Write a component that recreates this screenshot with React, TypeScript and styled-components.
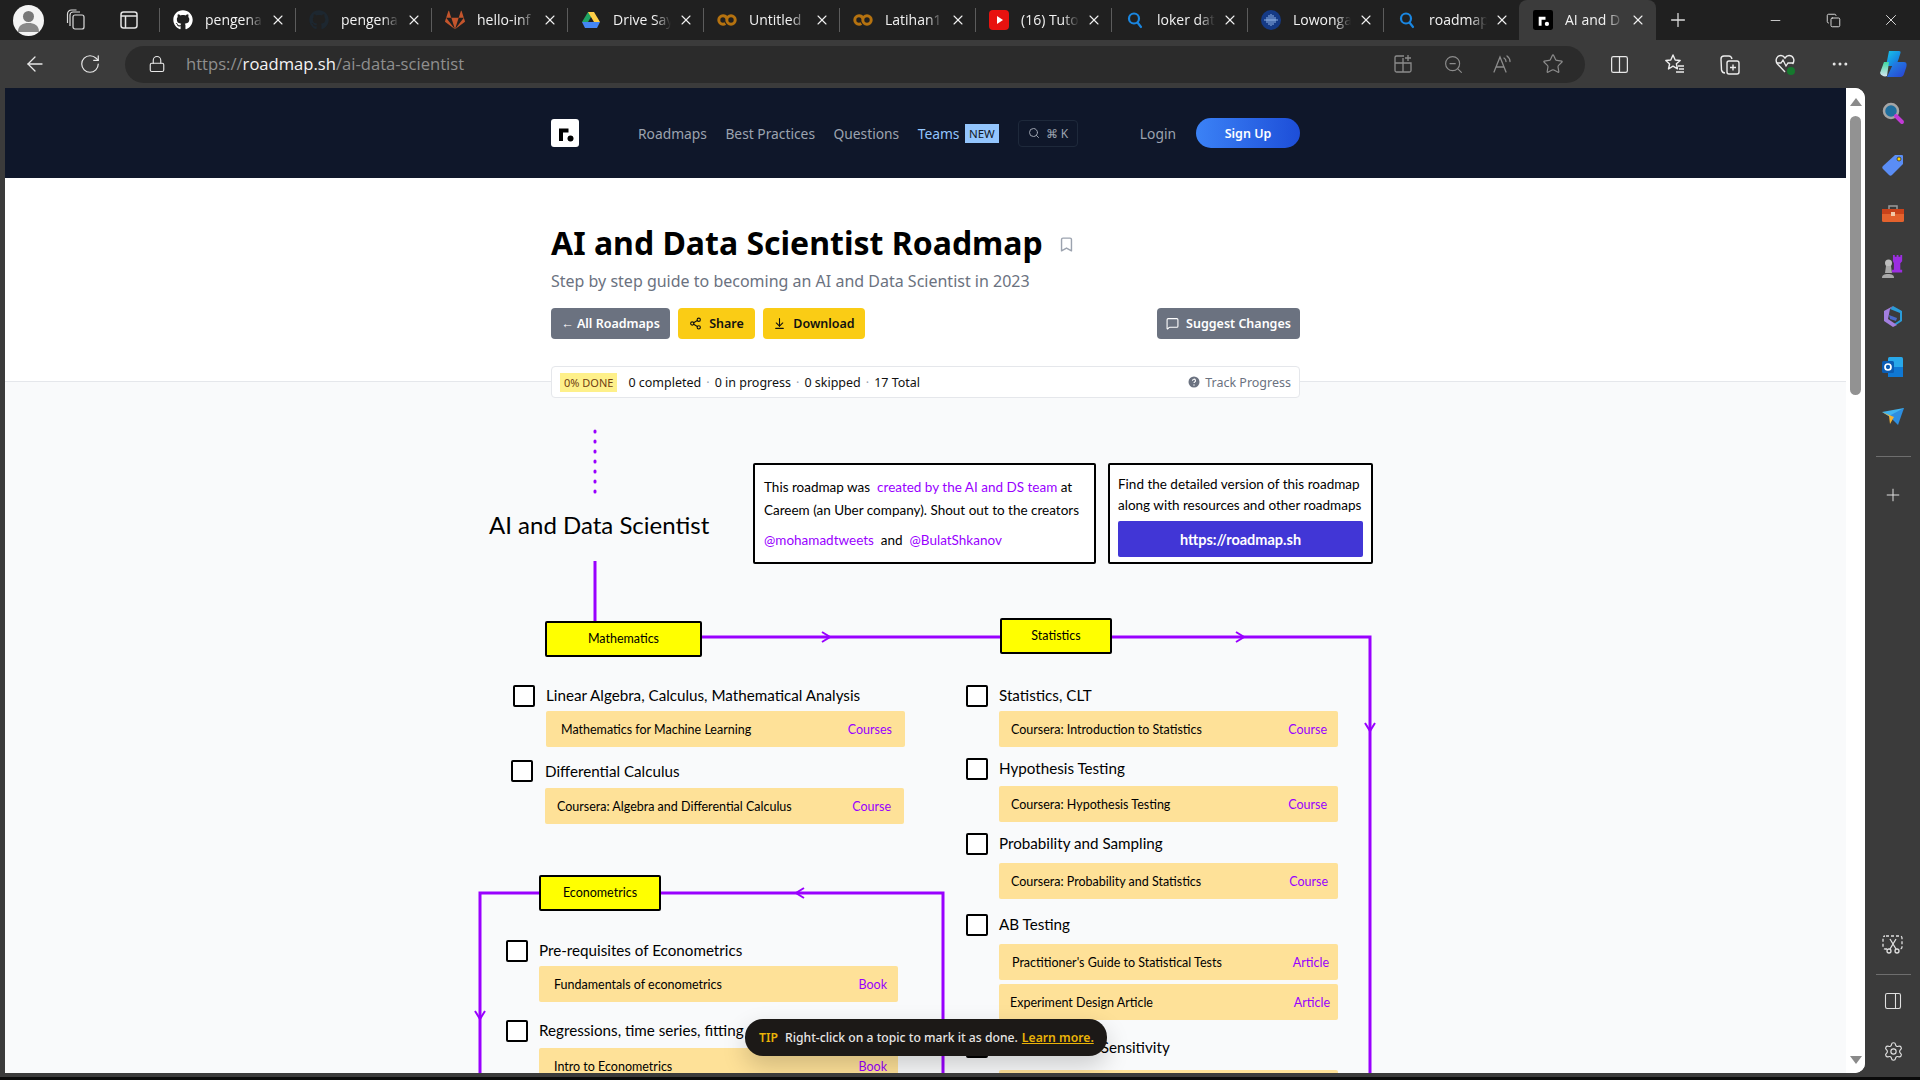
import React from "react";
import styled, { createGlobalStyle } from "styled-components";
import { ArrowLeft, RotateCw, Lock, ZoomOut, Star, Columns2, Ellipsis, Plus, Minus, X, Copy, Search, Share2, ArrowDownToLine, MessageSquare, Bookmark, PanelRight, Settings } from "lucide-react";
import { FaGithub, FaGitlab } from "react-icons/fa";

const Global = createGlobalStyle`
  html, body { margin: 0; padding: 0; height: 1080px; overflow: hidden; background: #0a0a0a; }
  * { box-sizing: border-box; }
`;

const Window = styled.div`
  width: 1920px; height: 1080px; display: flex; flex-direction: column;
  background: #3b3b3b; font-family: "Open Sans", "Noto Sans", sans-serif; color: #fff;
`;
const TabStrip = styled.div`
  height: 40px; background: #202020; display: flex; align-items: center; flex-shrink: 0; position: relative;
`;
const Avatar = styled.div`
  width: 31px; height: 31px; border-radius: 50%; background: #f4f4f4; margin-left: 13px; display: flex; align-items: center; justify-content: center;
  overflow: hidden; flex-shrink: 0;
`;
const StripIcon = styled.div`
  width: ${p => p.$w}px; display: flex; justify-content: center; color: #dcdcdc; flex-shrink: 0;
`;
const StripGap = styled.div`
  width: 9px; flex-shrink: 0;
`;
const Tab = styled.div`
  width: ${p => p.$active ? 137 : 136}px; height: 40px; display: flex; align-items: center; flex-shrink: 0; position: relative; padding-left: 14px;
  background: ${p => p.$active ? "#3b3b3b" : "transparent"};
  border-radius: ${p => p.$active ? "8px 8px 0 0" : "0"};
  &::before {
    content: ''; position: absolute; left: 0; top: 8px; height: 24px; width: 1px;
    background: ${p => p.$active || p.$bare ? "transparent" : "#5c5c5c"};
  }
`;
const TabFav = styled.div`
  width: 20px; height: 20px; display: flex; align-items: center; justify-content: center; flex-shrink: 0; margin-right: 12px;
`;
const TabTitle = styled.div`
  width: 58px; font-size: 14px; line-height: 18px; margin-top: -1px; color: #f2f2f2; white-space: nowrap; overflow: hidden; flex-shrink: 0;
  -webkit-mask-image: linear-gradient(to right, #000 72%, transparent 100%);
  mask-image: linear-gradient(to right, #000 72%, transparent 100%);
`;
const TabClose = styled.div`
  display: flex; margin-left: 7px; color: #f2f2f2;
`;
const WinControls = styled.div`
  margin-left: auto; display: flex; align-items: center; color: #ececec;
`;
const WinBtn = styled.div`
  width: 58px; display: flex; justify-content: center;
`;
const Toolbar = styled.div`
  height: 48px; background: #3b3b3b; display: flex; align-items: center; flex-shrink: 0; color: #e8e8e8;
`;
const ToolBtn = styled.div`
  width: ${p => p.$w || 55}px; display: flex; justify-content: center; align-items: center; flex-shrink: 0;
`;
const Address = styled.div`
  width: 1460px; height: 37px; border-radius: 19px; background: #2b2b2b; display: flex; align-items: center; margin-left: 15px; margin-right: 7px;
  padding-left: 23px; flex-shrink: 0;
`;
const UrlText = styled.div`
  margin-left: 20px; font-size: 16.6px; line-height: 22px; margin-top: -1px; color: #8f8f8f;
  b { color: #f4f4f4; font-weight: 400; }
`;
const AddressTools = styled.div`
  margin-left: auto; display: flex; align-items: center; color: #8c8c8c; padding-right: 7px;
`;
const AddrBtn = styled.div`
  width: 50px; display: flex; justify-content: center;
`;
const Body = styled.div`
  flex: 1; display: flex; padding-left: 5px; min-height: 0; background: #3b3b3b;
`;
const Viewport = styled.div`
  width: 1860px; height: 985px; display: flex; background: #fff; border-radius: 0 10px 10px 0; overflow: hidden; position: relative;
`;
const Page = styled.div`
  width: 1841px; display: flex; flex-direction: column; background: #fff; font-family: "Noto Sans", "Open Sans", sans-serif;
`;
const Nav = styled.div`
  height: 90px; background: #0f172a; display: flex; padding-left: 546px; flex-shrink: 0;
`;
const NavInner = styled.div`
  width: 749px; height: 90px; display: flex; align-items: center; font-size: 13.8px; color: #9ca3af;
`;
const LogoBox = styled.div`
  width: 28px; height: 28px; margin-right: 59px; display: flex;
`;
const NavLink = styled.span`
  margin-right: 18.5px; color: ${p => p.$c || "#9ca3af"}; white-space: nowrap;
`;
const NewBadge = styled.span`
  background: #93c5fd; color: #111827; font-size: 11.5px; padding: 0 4px; height: 19px; line-height: 19px; margin-left: -13px; margin-top: 1px;
`;
const SearchBtn = styled.div`
  margin-left: 19px; width: 60px; height: 27px; border: 1px solid #1e293b; border-radius: 4px; display: flex; align-items: center; justify-content: center; gap: 6px; font-size: 12px; color: #9ca3af;
`;
const Login = styled.span`
  margin-left: auto; margin-right: 20px;
`;
const SignUp = styled.div`
  width: 104px; height: 30px; border-radius: 15px; background: linear-gradient(to right, #3b82f6, #1d4ed8); color: #fff; font-weight: 600; font-size: 12.5px;
  display: flex; align-items: center; justify-content: center;
`;
const Header = styled.div`
  width: 749px; margin: 0 0 0 546px; position: relative; z-index: 2; flex-shrink: 0;
`;
const TitleRow = styled.div`
  display: flex; align-items: center; margin-top: 42px; height: 46px;
`;
const Title = styled.h1`
  margin: 0; font-size: 32px; font-weight: 700; color: #000; line-height: 46px; white-space: nowrap;
`;
const BookmarkWrap = styled.div`
  margin-left: 15px; color: #9ca3af; display: flex; margin-top: 2px;
`;
const Sub = styled.p`
  margin: 3px 0 0; font-size: 16px; color: #6b7280; line-height: 24px; white-space: nowrap;
`;
const Actions = styled.div`
  display: flex; gap: 8px; margin-top: 15px;
`;
const Btn = styled.div`
  height: 31px; width: ${p => p.$w}px; border-radius: 4px; font-size: 12.5px; font-weight: 600; display: flex; align-items: center; justify-content: center; gap: 7px;
  background: ${p => p.$gray ? "#6b7280" : "#facc15"}; color: ${p => p.$gray ? "#fff" : "#111"}; white-space: nowrap;
  ${p => p.$push ? "margin-left: auto;" : ""}
`;
const Progress = styled.div`
  height: 32px; margin-top: 27px; margin-bottom: -16px; background: #fff; border: 1px solid #e5e7eb; border-radius: 4px; display: flex; align-items: center; padding: 0 8px; font-size: 12.5px; color: #111; white-space: nowrap;
`;
const DoneBadge = styled.span`
  background: #fef08a; color: #713f12; height: 19px; line-height: 19px; padding: 0 4px; font-size: 11px; margin-right: 11px; 
`;
const Dot = styled.span`
  color: #9ca3af; margin: 0 5px;
`;
const Track = styled.span`
  margin-left: auto; color: #6b7280; display: flex; align-items: center; gap: 5px;
`;
const Canvas = styled.div`
  flex: 1; background: #f9fafb; border-top: 1px solid #e5e7eb; position: relative; overflow: hidden; margin-top: -1px;
  font-family: Lato, "Open Sans", sans-serif; color: #000;
`;
const Wires = styled.svg`
  position: absolute; left: 0; top: 0;
`;
const Big = styled.div`
  position: absolute; left: ${p => p.$x - 5}px; top: ${p => p.$y - 382}px; font-size: 24px; white-space: nowrap; line-height: 30px;
`;
const Note = styled.div`
  position: absolute; left: ${p => p.$x - 5}px; top: ${p => p.$y - 382}px; width: ${p => p.$w}px; height: 101px; background: #fff; border: 2.5px solid #000; border-radius: 2px; font-size: 13.5px; padding: ${p => p.$pad};
`;
const NoteLine = styled.div`
  line-height: ${p => p.$h}px; white-space: nowrap;
  a { color: #9900ff; }
`;
const RoadBtn = styled.div`
  height: 36px; margin-top: 5px; background: #4136d6; color: #fff; border-radius: 2px; font-size: 14.5px; font-weight: 700; display: flex; align-items: center; justify-content: center;
`;
const Topic = styled.div`
  position: absolute; left: ${p => p.$x - 5}px; top: ${p => p.$y - 382}px; width: ${p => p.$w}px; height: ${p => p.$h}px; background: #ffff00; border: 2.5px solid #000; border-radius: 2px; font-size: 12.5px; display: flex; align-items: center; justify-content: center; padding-bottom: 1px;
`;
const Check = styled.div`
  position: absolute; left: ${p => p.$x - 5}px; top: ${p => p.$y - 382}px; width: 22px; height: 22px; border: 2.5px solid #000; border-radius: 2px; background: #fff;
`;
const Label = styled.div`
  position: absolute; left: ${p => p.$x - 5}px; top: ${p => p.$y - 382 - 12}px; font-size: 15.2px; line-height: 22px; white-space: nowrap;
`;
const Res = styled.div`
  position: absolute; left: ${p => p.$x - 5}px; top: ${p => p.$y - 382}px; width: ${p => p.$w}px; height: 36px; background: #fee198; border-radius: 2px; display: flex; align-items: center; justify-content: space-between;
  padding: 0 ${p => p.$end}px 0 ${p => p.$pad}px; font-size: 12.5px; white-space: nowrap;
  span { color: #9900ff; }
`;
const TipBar = styled.div`
  position: absolute; left: 740px; top: 931px; width: 362px; height: 37px; border-radius: 18px; background: #1c1917; color: #e7e5e4; display: flex; align-items: center; padding-left: 14px; font-size: 12.2px; white-space: nowrap;
  box-shadow: 0 10px 25px rgba(0,0,0,0.18); font-family: "Noto Sans", sans-serif; z-index: 5; font-weight: 500;
  b { color: #eab308; font-weight: 600; margin-right: 7px; }
  u { color: #eab308; margin-left: 4px; font-weight: 600; }
`;
const Scrollbar = styled.div`
  width: 19px; background: #fff; display: flex; flex-direction: column; align-items: center; padding-top: 10px;
`;
const ArrowUp = styled.div`
  width: 0; height: 0; border-left: 6px solid transparent; border-right: 6px solid transparent; border-bottom: 8px solid #8a8a8a;
`;
const ArrowDown = styled.div`
  width: 0; height: 0; border-left: 6px solid transparent; border-right: 6px solid transparent; border-top: 8px solid #8a8a8a; margin-top: auto; margin-bottom: 9px;
`;
const Thumb = styled.div`
  width: 11px; height: 279px; border-radius: 6px; background: #929292; margin-top: 10px;
`;
const Side = styled.div`
  width: 55px; display: flex; flex-direction: column; align-items: center; color: #e0e0e0; height: 989px; padding: 1px 0 0 1px;
`;
const SideIcon = styled.div`
  height: 50.5px; width: 100%; display: flex; align-items: center; justify-content: center; flex-shrink: 0;
`;
const SideRule = styled.div`
  width: 35px; height: 1px; background: #6e6e6e; flex-shrink: 0; margin: ${p => p.$m};
`;
const SideSpring = styled.div`
  flex: 1;
`;
const BottomStrip = styled.div`
  height: 3px; background: #0b0b0b; flex-shrink: 0;
`;

const Colab = () => <svg width="20" height="14" viewBox="0 0 20 14" fill="none" stroke="#b5720f" strokeWidth="3"><circle cx="6" cy="7" r="4.2" strokeDasharray="20 7" strokeDashoffset="-4"/><circle cx="14" cy="7" r="4.2"/></svg>;
const Mag = () => <svg width="18" height="18" viewBox="0 0 18 18" fill="none" stroke="#1a86e0" strokeWidth="2.2"><circle cx="8" cy="7.5" r="5"/><path d="M11.5 11.5 15 16" strokeLinecap="round"/></svg>;
const Drive = () => <svg width="20" height="18" viewBox="0 0 20 18"><path d="M7 1h6L7 11H1z" fill="#1fa463"/><path d="M13 1l6 10h-6L7 1z" fill="#ffcf47"/><path d="M1 11h18l-3 6H4z" fill="#4486f4"/></svg>;
const YT = () => <svg width="20" height="20" viewBox="0 0 20 20"><rect width="20" height="20" rx="4" fill="#e8120f"/><path d="M8 6l6 4-6 4z" fill="#fff"/></svg>;
const Low = () => <svg width="20" height="20" viewBox="0 0 20 20"><circle cx="10" cy="10" r="10" fill="#153a85"/><path d="M3 10h14M10 4v12M6 7v6M14 7v6M8 5v10M12 5v10" stroke="#8fb2e6" strokeWidth="1"/></svg>;
const RLogo = ({ s = 20, bg = "#000", fg = "#fff" }: any) => <svg width={s} height={s} viewBox="0 0 28 28"><rect width="28" height="28" rx="3" fill={bg}/><path d="M8 22V9.5h9.5v4H12V22z" fill={fg}/><circle cx="19.5" cy="19.5" r="3" fill={fg}/></svg>;

const AvatarImg = () => <svg width="31" height="31" viewBox="0 0 31 31"><circle cx="15.5" cy="11.5" r="5.5" fill="#777"/><path d="M5 27c0-7 5-9 10.5-9S26 20 26 27z" fill="#888"/></svg>;
const Workspaces = () => <svg width="22" height="22" viewBox="0 0 22 22" fill="none" stroke="#dcdcdc" strokeWidth="1.2"><rect x="8" y="6" width="11" height="14" rx="2"/><path d="M5 17V6a3 3 0 0 1 3-3h7"/><path d="M2.5 14V5a4 4 0 0 1 4-4h5"/></svg>;
const TabsIcon = () => <svg width="20" height="20" viewBox="0 0 20 20" fill="none" stroke="#e2e2e2" strokeWidth="1.5"><rect x="2" y="2" width="16" height="16" rx="2.5"/><path d="M2 6h16M6.5 6v12"/></svg>;

const GridAdd = () => <svg width="20" height="20" viewBox="0 0 20 20" fill="none" stroke="#8c8c8c" strokeWidth="1.3"><path d="M11 2H3.5A1.5 1.5 0 0 0 2 3.5v13A1.5 1.5 0 0 0 3.5 18h13a1.5 1.5 0 0 0 1.500-1.500V9H2M10 4v14M15 1v6M12 4h6"/></svg>;
const ReadAloud = () => <svg width="24" height="22" viewBox="0 0 24 22" fill="none" stroke="#8c8c8c" strokeWidth="1.3" strokeLinecap="round"><path d="M3 19 9 4l6 15M5 14h8"/><path d="M13 5c1.500 1 2 2 2 3.500M16 3c2 1.500 3 3 3 5.500"/></svg>;
const FavList = () => <svg width="22" height="22" viewBox="0 0 22 22" fill="none" stroke="#ececec" strokeWidth="1.4" strokeLinejoin="round"><path d="M9 2l2.200 5 5 .5-3.800 3.300 1.100 5L9 13.200 4.500 16l1.100-5L1.800 7.500l5-.5z"/><path d="M14 13h6M15 16h5M12 19h8"/></svg>;
const Collections = () => <svg width="22" height="22" viewBox="0 0 22 22" fill="none" stroke="#ececec" strokeWidth="1.4"><path d="M6 20c-2 0-3-1-3.500-3L2 6c0-2 1-3 3-3h5c2 0 2.500 1 3 3"/><rect x="8" y="8" width="12" height="13" rx="2"/><path d="M14 11.500v6M11 14.500h6"/></svg>;
const Health = () => <svg width="22" height="22" viewBox="0 0 22 22"><path d="M11 19 3.500 11C.5 7 3 2.500 7 2.500c2 0 3 1 4 2.500 1-1.500 2-2.500 4-2.500 4 0 6.500 4.500 3.500 8.500" fill="none" stroke="#ececec" strokeWidth="1.400"/><path d="M3 10h4l2-3 3 6 2-3h5" fill="none" stroke="#ececec" strokeWidth="1.300"/><circle cx="17" cy="18" r="4" fill="#16792e"/></svg>;
const Copilot = () => <svg width="30" height="30" viewBox="0 0 30 30"><defs><linearGradient id="cpA" x1="0" y1="0" x2="1" y2="1"><stop offset="0" stopColor="#19c7e8"/><stop offset="1" stopColor="#1466e0"/></linearGradient><linearGradient id="cpB" x1="0" y1="0" x2="1" y2="1"><stop offset="0" stopColor="#1f8fe8"/><stop offset="1" stopColor="#2a3fd0"/></linearGradient><linearGradient id="cpC" x1="0" y1="0" x2="0" y2="1"><stop offset="0" stopColor="#3fd7a0"/><stop offset="1" stopColor="#d6e6f0"/></linearGradient></defs><path d="M11 2h10c3 0 1 3 0 7l-3 8H8z" fill="url(#cpA)"/><path d="M6 13h5l-2 14c-2 1-6 0-7-3z" fill="url(#cpC)"/><path d="M16 13h10c3 0 3 3 2 6l-2 6c-1 3-3 3-5 3H9z" fill="url(#cpB)"/></svg>;

const S1 = () => <svg width="24" height="24" viewBox="0 0 24 24"><circle cx="10" cy="9" r="7" fill="#1f6f9f" stroke="#a5a5a5" strokeWidth="2.500"/><path d="M15 14l6 6" stroke="#c23ad6" strokeWidth="4" strokeLinecap="round"/></svg>;
const S2 = () => <svg width="24" height="24" viewBox="0 0 24 24"><path d="M14 2h7c1 0 1 1 1 1v8L11 22c-1 1-2 1-3 0l-6-6c-1-1-1-2 0-3z" fill="#5a8df5"/><circle cx="18" cy="6" r="2" fill="#ffd400" stroke="#333" strokeWidth=".8"/></svg>;
const S3 = () => <svg width="24" height="24" viewBox="0 0 24 24"><path d="M8 6V3h8v3" fill="none" stroke="#9a9a9a" strokeWidth="1.500"/><rect x="1" y="6" width="22" height="13" rx="1.500" fill="#e4622d"/><rect x="1" y="6" width="22" height="5" fill="#c9421a"/><rect x="10" y="9" width="4" height="4" fill="#f2c9a8"/></svg>;
const S4 = () => <svg width="24" height="24" viewBox="0 0 24 24"><path d="M13 1h2v2h2V1h2v2h2V1h2v7l-2 2v7h2v3H12v-3h2v-7l-1-2z" fill="#9b2ee0" transform="scale(.92)"/><circle cx="7.500" cy="9" r="3.500" fill="#bdbdbd"/><path d="M5 12h5l1 7H4zM1 24c0-3 2-4 6-4s6 1 6 4z" fill="#a8a8a8"/></svg>;
const S5 = () => <svg width="24" height="24" viewBox="0 0 24 24"><path d="M12 2 21 7v10l-6 4-2-1 6-4V9L9 5z" fill="#2a9bd8"/><path d="M3 7 12 2 9 5 7 15l6 4 3 2-4 2-9-6z" fill="#a37fe0"/><path d="M8 11l8 3-1 3-6-2z" fill="#4a69c9"/></svg>;
const S6 = () => <svg width="24" height="24" viewBox="0 0 24 24"><rect x="7" y="2" width="15" height="20" rx="1.500" fill="#28a8ea"/><path d="M7 12l15 0v10H7z" fill="#0f78d4"/><rect x="1" y="6" width="12" height="12" rx="1.500" fill="#0b5cb3"/><circle cx="7" cy="12" r="3" fill="none" stroke="#fff" strokeWidth="1.700"/></svg>;
const S7 = () => <svg width="24" height="24" viewBox="0 0 24 24"><path d="M1 7l22-4-9 12z" fill="#40b4f0"/><path d="M8 11 23 3 17 20z" fill="#2d8ee0"/><path d="M1 7l7 4 1 8 4-7z" fill="#f2b233"/></svg>;
const ScreenCut = () => <svg width="22" height="22" viewBox="0 0 22 22" fill="none" stroke="#e0e0e0" strokeWidth="1.300"><path d="M4 3h14a2 2 0 0 1 2 2v9a2 2 0 0 1-2 2h-1M5 16H3a2 2 0 0 1-2-2V5a2 2 0 0 1 2-2" strokeDasharray="3 2"/><circle cx="7" cy="18" r="2"/><circle cx="15" cy="18" r="2"/><path d="M8 16 14 6M14 16 8 6"/></svg>;

const tabs: [React.ReactNode, string, boolean?][] = [
  [<FaGithub size={20} color="#fff" />, "pengena"],
  [<FaGithub size={20} color="#1d2730" />, "pengena"],
  [<FaGitlab size={20} color="#c4552c" />, "hello-inf"],
  [<Drive />, "Drive Say"],
  [<Colab />, "Untitled"],
  [<Colab />, "Latihan1"],
  [<YT />, "(16) Tuto"],
  [<Mag />, "loker dat"],
  [<Low />, "Lowonga"],
  [<Mag />, "roadmap"],
  [<RLogo />, "AI and D", true],
];

const checks: [number, number][] = [[513,685],[511,760],[966,685],[966,758],[966,833],[966,914],[966,1036],[506,940],[506,1020]];
const labels: [number, number, string][] = [
  [546,696,"Linear Algebra, Calculus, Mathematical Analysis"],[545,772,"Differential Calculus"],[999,696,"Statistics, CLT"],[999,769,"Hypothesis Testing"],[999,844,"Probability and Sampling"],[999,925,"AB Testing"],[999,1048,"Increasing Test Sensitivity"],[539,951,"Pre-requisites of Econometrics"],[539,1031,"Regressions, time series, fitting distributions"],
];
const resources: [number, number, number, number, number, string, string][] = [
  [546,711,359,15,13,"Mathematics for Machine Learning","Courses"],
  [545,788,359,12,13,"Coursera: Algebra and Differential Calculus","Course"],
  [999,711,339,12,11,"Coursera: Introduction to Statistics","Course"],
  [999,786,339,12,11,"Coursera: Hypothesis Testing","Course"],
  [999,863,339,12,10,"Coursera: Probability and Statistics","Course"],
  [999,944,339,13,9,"Practitioner's Guide to Statistical Tests","Article"],
  [999,984,339,11,8,"Experiment Design Article","Article"],
  [999,1070,339,12,9,"Test Sensitivity","Article"],
  [539,966,359,15,11,"Fundamentals of econometrics","Book"],
  [539,1048,359,15,11,"Intro to Econometrics","Book"],
];

export default function App() {
  return (
    <Window>
      <Global />
      <TabStrip>
        <Avatar><AvatarImg /></Avatar>
        <StripIcon $w={64}><Workspaces /></StripIcon>
        <StripIcon $w={42}><TabsIcon /></StripIcon>
        <StripGap />
        {tabs.map(([ic, t, act], i) => (
          <Tab key={i} $active={act} $bare={i === 10}>
            <TabFav>{ic}</TabFav>
            <TabTitle>{t}</TabTitle>
            <TabClose><X size={16} strokeWidth={1.6} /></TabClose>
          </Tab>
        ))}
        <StripIcon $w={44}><Plus size={22} strokeWidth={1.4} /></StripIcon>
        <WinControls>
          <WinBtn><Minus size={15} strokeWidth={1.3} /></WinBtn>
          <WinBtn><Copy size={15} strokeWidth={1.4} /></WinBtn>
          <WinBtn><X size={18} strokeWidth={1.2} /></WinBtn>
        </WinControls>
      </TabStrip>
      <Toolbar>
        <ToolBtn $w={69}><ArrowLeft size={24} strokeWidth={1.3} /></ToolBtn>
        <ToolBtn $w={41}><RotateCw size={22} strokeWidth={1.3} /></ToolBtn>
        <Address>
          <Lock size={18} strokeWidth={1.5} color="#e8e8e8" />
          <UrlText>https://<b>roadmap.sh</b>/ai-data-scientist</UrlText>
          <AddressTools>
            <AddrBtn><GridAdd /></AddrBtn>
            <AddrBtn><ZoomOut size={21} strokeWidth={1.3} /></AddrBtn>
            <AddrBtn><ReadAloud /></AddrBtn>
            <AddrBtn><Star size={22} strokeWidth={1.3} /></AddrBtn>
          </AddressTools>
        </Address>
        <ToolBtn><Columns2 size={21} strokeWidth={1.4} /></ToolBtn>
        <ToolBtn><FavList /></ToolBtn>
        <ToolBtn><Collections /></ToolBtn>
        <ToolBtn><Health /></ToolBtn>
        <ToolBtn><Ellipsis size={20} strokeWidth={1.6} /></ToolBtn>
        <ToolBtn $w={52}><Copilot /></ToolBtn>
      </Toolbar>
      <Body>
        <Viewport>
          <Page>
            <Nav>
              <NavInner>
                <LogoBox><RLogo s={28} bg="#fff" fg="#000" /></LogoBox>
                <NavLink>Roadmaps</NavLink>
                <NavLink>Best Practices</NavLink>
                <NavLink>Questions</NavLink>
                <NavLink $c="#93c5fd">Teams</NavLink>
                <NewBadge>NEW</NewBadge>
                <SearchBtn><Search size={12} /><span>⌘ K</span></SearchBtn>
                <Login>Login</Login>
                <SignUp>Sign Up</SignUp>
              </NavInner>
            </Nav>
            <Header>
              <TitleRow>
                <Title>AI and Data Scientist Roadmap</Title>
                <BookmarkWrap><Bookmark size={17} strokeWidth={2} /></BookmarkWrap>
              </TitleRow>
              <Sub>Step by step guide to becoming an AI and Data Scientist in 2023</Sub>
              <Actions>
                <Btn $gray $w={119}>← All Roadmaps</Btn>
                <Btn $w={77}><Share2 size={13} />Share</Btn>
                <Btn $w={102}><ArrowDownToLine size={13} />Download</Btn>
                <Btn $gray $push $w={143}><MessageSquare size={13} />Suggest Changes</Btn>
              </Actions>
              <Progress>
                <DoneBadge>0% DONE</DoneBadge>
                0 completed<Dot>·</Dot>0 in progress<Dot>·</Dot>0 skipped<Dot>·</Dot>17 Total
                <Track>
                  <svg width="12" height="12" viewBox="0 0 12 12"><circle cx="6" cy="6" r="5.500" fill="#6b7280"/><path d="M4.500 4.700a1.500 1.500 0 1 1 2.200 1.300c-.5.300-.7.600-.7 1.100" fill="none" stroke="#fff" strokeWidth="1.100"/><circle cx="6" cy="9" r=".7" fill="#fff"/></svg>
                  Track Progress
                </Track>
              </Progress>
            </Header>
            <Canvas>
              <Wires width="1841" height="700">
                <g transform="translate(-5 -382)" fill="none" stroke="#9900ff">
                  <path d="M595 431V495" strokeWidth="3" strokeDasharray="1 9" strokeLinecap="round" />
                  <path d="M595 561V621" strokeWidth="3" />
                  <path d="M701 637H1001M1111 637H1370V1090" strokeWidth="3" />
                  <path d="M661 893H943V1090M540 893H480V1090" strokeWidth="3" />
                  <path d="M822 632l8 5-8 5M1236 632l8 5-8 5M1365 723l5 8 5-8M804 888l-8 5 8 5M475 1011l5 8 5-8" strokeWidth="2" />
                </g>
              </Wires>
              <Big $x={489} $y={510}>AI and Data Scientist</Big>
              <Note $x={753} $y={463} $w={343} $pad="10px 0 0 9px">
                <NoteLine $h={24}>This roadmap was &nbsp;<a>created by the AI and DS team</a> at</NoteLine>
                <NoteLine $h={23}>Careem (an Uber company). Shout out to the creators</NoteLine>
                <NoteLine $h={37}><a>@mohamadtweets</a>&nbsp; and &nbsp;<a>@BulatShkanov</a></NoteLine>
              </Note>
              <Note $x={1108} $y={463} $w={265} $pad="9px 8px 0 8px">
                <NoteLine $h={21}>Find the detailed version of this roadmap</NoteLine>
                <NoteLine $h={21}>along with resources and other roadmaps</NoteLine>
                <RoadBtn>https://roadmap.sh</RoadBtn>
              </Note>
              <Topic $x={545} $y={621} $w={157} $h={36}>Mathematics</Topic>
              <Topic $x={1000} $y={618} $w={112} $h={36}>Statistics</Topic>
              <Topic $x={539} $y={875} $w={122} $h={36}>Econometrics</Topic>
              {checks.map(([x, y], i) => <Check key={i} $x={x} $y={y} />)}
              {labels.map(([x, y, t], i) => <Label key={i} $x={x} $y={y}>{t}</Label>)}
              {resources.map(([x, y, w, p, e, a, b], i) => <Res key={i} $x={x} $y={y} $w={w} $pad={p} $end={e}>{a}<span>{b}</span></Res>)}
            </Canvas>
          </Page>
          <Scrollbar><ArrowUp /><Thumb /><ArrowDown /></Scrollbar>
          <TipBar><b>TIP</b>Right-click on a topic to mark it as done.<u>Learn more.</u></TipBar>
        </Viewport>
        <Side>
          <SideIcon><S1 /></SideIcon>
          <SideIcon><S2 /></SideIcon>
          <SideIcon><S3 /></SideIcon>
          <SideIcon><S4 /></SideIcon>
          <SideIcon><S5 /></SideIcon>
          <SideIcon><S6 /></SideIcon>
          <SideIcon><S7 /></SideIcon>
          <SideRule $m="13px 0 13px" />
          <SideIcon><Plus size={20} strokeWidth={1.2} /></SideIcon>
          <SideSpring />
          <SideIcon><ScreenCut /></SideIcon>
          <SideRule $m="5px 0 1px" />
          <SideIcon><PanelRight size={20} strokeWidth={1.3} /></SideIcon>
          <SideIcon><Settings size={21} strokeWidth={1.3} /></SideIcon>
        </Side>
      </Body>
      <BottomStrip />
    </Window>
  );
}
